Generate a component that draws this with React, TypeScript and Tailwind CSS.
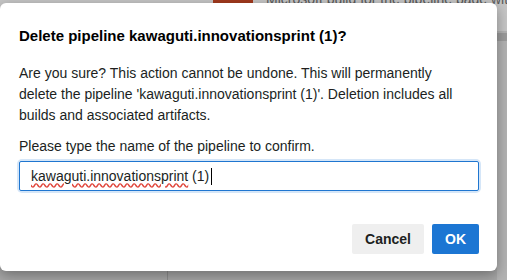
export default function App() {
  return (
    <div className="relative w-[507px] h-[280px] overflow-hidden bg-[#a7a7a7] font-['Liberation_Sans',Arial,sans-serif]">
      {/* page behind the overlay */}
      <div className="absolute inset-x-0 top-0 h-[31px] bg-[#c6c6c6]">
        <div className="absolute left-[213px] top-0 w-[40px] h-[8px] bg-[#a33a1e]" />
        <div className="absolute left-[266px] top-[-11px] text-[14px] leading-5 text-[#5a5a5a] whitespace-nowrap">
          Microsoft build for the pipeline page with
        </div>
      </div>
      <div className="absolute right-0 top-[31px] w-[10px] h-[249px] bg-[#b3b3b3]">
        <div className="mt-[2px] h-[8px] bg-[#9c9c9c]" />
      </div>
      <div className="absolute left-[167px] bottom-0 w-px h-[10px] bg-[#8e8e8e]" />

      {/* dialog */}
      <div className="relative mt-[3px] w-[497px] h-[268px] bg-white rounded-md shadow-[0_4px_14px_rgba(0,0,0,0.35)] pl-[19px] pr-[18px] pt-[23px] text-[#201f1e]">
        <h2 className="text-[15px] font-bold leading-5 text-black">
          Delete pipeline kawaguti.innovationsprint (1)?
        </h2>
        <p className="mt-[17px] text-[14px] leading-[21px]">
          Are you sure? This action cannot be undone. This will permanently
          <br />
          delete the pipeline 'kawaguti.innovationsprint (1)'. Deletion includes all
          <br />
          builds and associated artifacts.
        </p>
        <p className="mt-[10px] text-[14px] leading-5">Please type the name of the pipeline to confirm.</p>
        <div className="mt-[5px] w-[460px] rounded-[3px] ring-[2px] ring-[#d5e6f8]">
          <div className="h-[30px] border border-[#1f76d0] rounded-[2px] flex items-center px-[11px] text-[14px]">
            <span className="underline decoration-wavy decoration-[#e0453a] underline-offset-2">
              kawaguti.innovationsprint
            </span>
            <span>&nbsp;(1)</span>
            <span className="ml-[2px] w-px h-[17px] bg-black" />
          </div>
        </div>
        <div className="mt-[33px] flex justify-end gap-2">
          <button className="h-[30px] px-[13px] rounded-[2px] bg-[#efefef] text-[14px] font-bold text-[#201f1e]">
            Cancel
          </button>
          <button className="h-[30px] px-[13px] rounded-[2px] bg-[#1c76d3] text-[14px] font-bold text-white">
            OK
          </button>
        </div>
      </div>
    </div>
  );
}
